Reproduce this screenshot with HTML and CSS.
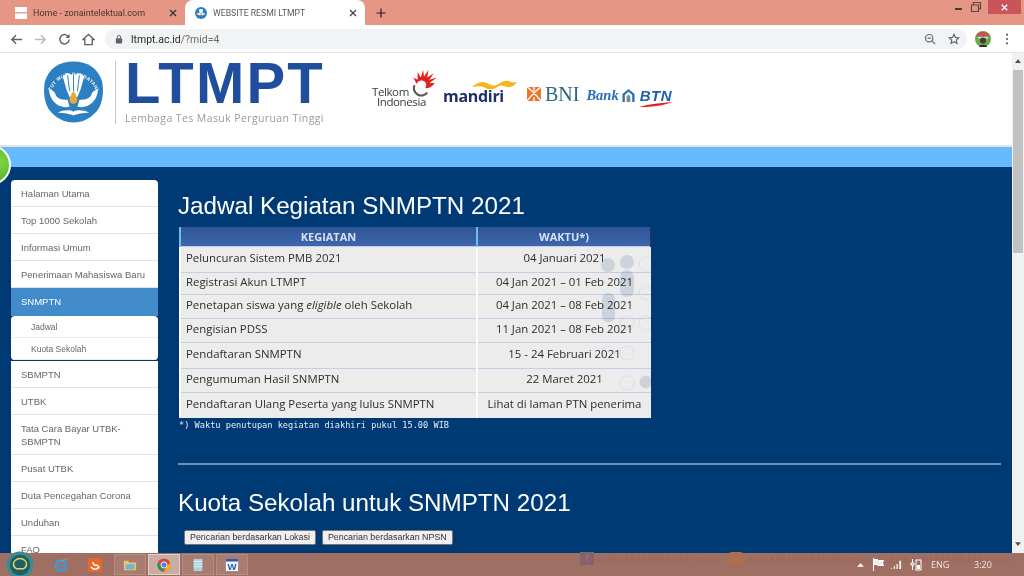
FILE: index.html
```html
<!DOCTYPE html>
<html lang="en">
<head>
    <meta charset="UTF-8">
    <meta name="viewport" content="width=device-width, initial-scale=1.0">
    <title>WEBSITE RESMI LTMPT</title>
    <link rel="stylesheet" href="styles.css">
</head>
<body>
    <div class="tabstrip">
        <div class="tab">
            <svg class="favicon" viewBox="0 0 12 12"><rect width="12" height="12" fill="#fff"/><rect y="5" width="12" height="1.5" fill="#e8a090"/></svg>
            <span class="tab-title">Home - zonaintelektual.com</span>
            <svg class="tab-close" viewBox="0 0 10 10"><path d="M2 2l6 6M8 2l-6 6" stroke="#333" stroke-width="1.3"/></svg>
        </div>
        <div class="tab active">
            <svg class="favicon" viewBox="0 0 12 12"><circle cx="6" cy="6" r="6" fill="#2b7fc3"/><path d="M1.500 6c1 2 3 2.500 4.500 2 1.500.5 3.500 0 4.500-2-1 .5-2.500.5-3 0L8 2.500 6 2 4 2.500 4.500 6c-.5.5-2 .5-3 0z" fill="#fff"/><circle cx="6" cy="7" r="1" fill="#e8a33a"/></svg>
            <span class="tab-title">WEBSITE RESMI LTMPT</span>
            <svg class="tab-close" viewBox="0 0 10 10"><path d="M2 2l6 6M8 2l-6 6" stroke="#444" stroke-width="1.3"/></svg>
        </div>
        <svg class="new-tab" viewBox="0 0 10 10"><path d="M5 .5v9M.5 5h9" stroke="#222" stroke-width="1.200"/></svg>
        <div class="window-controls">
            <svg class="win-btn min" viewBox="0 0 12 12"><rect x="1" y="7" width="7" height="2" fill="#4a3a36"/></svg>
            <svg class="win-btn" viewBox="0 0 12 12"><path d="M1.500 4h7v6.500h-7zM3.500 4V1.500h7V8H8.500" fill="none" stroke="#5a4a46" stroke-width="1.200"/></svg>
            <div class="win-close"><svg viewBox="0 0 10 10"><path d="M2 2l6 6M8 2l-6 6" stroke="#fff" stroke-width="1.500"/></svg></div>
        </div>
    </div>
    <div class="toolbar">
        <svg class="nav-icon" viewBox="0 0 14 14"><path d="M13 7H2M6.500 2.500L2 7l4.500 4.500" fill="none" stroke="#5f6368" stroke-width="1.600"/></svg>
        <svg class="nav-icon" viewBox="0 0 14 14"><path d="M1 7h11M7.500 2.500L12 7l-4.500 4.500" fill="none" stroke="#b9bbbe" stroke-width="1.600"/></svg>
        <svg class="nav-icon" viewBox="0 0 14 14"><path d="M11.500 4.500A5 5 0 1 0 12 7" fill="none" stroke="#5f6368" stroke-width="1.600"/><path d="M12.500 1v4.500H8z" fill="#5f6368"/></svg>
        <svg class="nav-icon" viewBox="0 0 14 14"><path d="M7 1.500L1 7h2v5.500h8V7h2z" fill="none" stroke="#5f6368" stroke-width="1.500"/></svg>
        <div class="omnibox">
            <svg class="lock" viewBox="0 0 10 12"><rect x="1" y="5" width="8" height="6.500" rx="1" fill="#5f6368"/><path d="M3 5V3.500a2 2 0 0 1 4 0V5" fill="none" stroke="#5f6368" stroke-width="1.200"/></svg>
            <span class="url">ltmpt.ac.id<span class="url-path">/?mid=4</span></span>
            <svg class="omni-icon" viewBox="0 0 14 14"><circle cx="6" cy="6" r="4.300" fill="none" stroke="#5f6368" stroke-width="1.300"/><path d="M9.200 9.200L13 13M4 6h4" stroke="#5f6368" stroke-width="1.300"/></svg>
            <svg class="omni-icon star" viewBox="0 0 14 14"><path d="M7 1.500l1.700 3.600 3.800.5-2.800 2.600.7 3.900L7 10.200l-3.400 1.900.7-3.900L1.500 5.600l3.800-.5z" fill="none" stroke="#5f6368" stroke-width="1.300"/></svg>
        </div>
        <svg class="avatar" viewBox="0 0 16 16"><circle cx="8" cy="8" r="8" fill="#6aa84f"/><path d="M1 5a8 8 0 0 1 14 0z" fill="#c9534f"/><path d="M3 6h10v1.500H3z" fill="#ddd"/><circle cx="8" cy="9.500" r="3" fill="#4a3b2f"/><path d="M4 16c0-3 8-3 8 0z" fill="#2f2a26"/></svg>
        <svg class="kebab" viewBox="0 0 4 14"><circle cx="2" cy="2" r="1.300" fill="#5f6368"/><circle cx="2" cy="7" r="1.300" fill="#5f6368"/><circle cx="2" cy="12" r="1.300" fill="#5f6368"/></svg>
    </div>

    <div class="viewport">
        <div class="page">
            <header class="site-header">
                <svg class="seal" viewBox="0 0 62 62">
                    <path d="M31 0C45 0 56 7 60 20 62 30 61 42 55 50 48 58 40 62 31 62 22 62 14 58 7 50 1 42 0 30 2 20 6 7 17 0 31 0z" fill="#2b7fc3"/>
                    <defs><path id="seal-arc" d="M7 34A24.500 24.500 0 0 1 55 34"/></defs>
                    <text class="seal-text"><textPath href="#seal-arc" startOffset="50%" text-anchor="middle">TUT WURI HANDAYANI</textPath></text>
                    <path d="M20 15c3-2 5-3 5-3l6 2 6-2s2 1 5 3l-4 14-3 7h-8l-3-7z" fill="#fff"/>
                    <path d="M25 14l2 16M31 14v16M37 14l-2 16" stroke="#2b7fc3" stroke-width="1"/>
                    <path d="M6 28c4 1 6 3 7 6s5 5 12 5l2 7c-10 2-20-4-21-18zM56 28c-4 1-6 3-7 6s-5 5-12 5l-2 7c10 2 20-4 21-18z" fill="#fff"/>
                    <path d="M31 30c3 4 4 7 4 9a4 4 0 0 1-8 0c0-2 1-5 4-9z" fill="#eba83a"/>
                    <path d="M15 52c6-3 13-3 16-1 3-2 10-2 16 1-6 0-13 1-16 3-3-2-10-3-16-3z" fill="#fff"/>
                </svg>
                <div class="brand">
                    <div class="brand-name">LTMPT</div>
                    <div class="brand-sub">Lembaga Tes Masuk Perguruan Tinggi</div>
                </div>
                <div class="sponsors">
                    <div class="telkom">
                        <svg class="telkom-mark" viewBox="0 0 28 26">
                            <path d="M6 14a7 7 0 0 0 12 7" fill="none" stroke="#5a5a5a" stroke-width="2"/>
                            <path d="M8 13c1-3 4-4 6-3 3 1 4 4 2 7 4 0 7-2 9-5l-5 0 7-5-7 2 4-6-6 4 1-7-4 6-1-6-2 7-3-5 0 7-4-2z" fill="#e0231c"/>
                        </svg>
                        <span class="telkom-text">Telkom<br><span class="telkom-indent">Indonesia</span></span>
                    </div>
                    <div class="mandiri">
                        <svg class="mandiri-wave" viewBox="0 0 46 9"><path d="M0 7C6 2 10 1 15 3s7 4 12 1 7-4 10-3 5 2 9 1c-3 4-6 6-10 5s-6-3-10 0-8 3-12 1-8-2-14-1z" fill="#f6b51e"/></svg>
                        <span class="mandiri-text">mandiri</span>
                    </div>
                    <div class="bni">
                        <svg class="bni-mark" viewBox="0 0 14 14"><rect width="14" height="14" fill="#e9762b"/><path d="M0 0c5 3 9 8 14 14M14 0C9 3 5 8 0 14M7 0v4M7 10v4" fill="none" stroke="#fff" stroke-width="1.300"/></svg>
                        <span class="bni-text">BNI</span>
                    </div>
                    <div class="btn-bank">
                        <span class="bank-text">Bank</span>
                        <svg class="btn-house" viewBox="0 0 14 15"><path d="M7 .5L.5 6v8.500h13V6z" fill="#2a70b8"/><path d="M7 3.500L3 7v7.500h8V7z" fill="#fff"/><path d="M5 14.500V9a2 2 0 0 1 4 0v5.500z" fill="#7c8a96"/></svg>
                        <div class="btn-mark">
                            <span class="btn-text">BTN</span>
                            <svg class="btn-swoosh" viewBox="0 0 34 5"><path d="M0 5C10 2 22 1 34 0c-8 3-20 5-34 5z" fill="#e21f26"/></svg>
                        </div>
                    </div>
                </div>
            </header>
            <div class="blue-bar"></div>
            <div class="green-dot"></div>
            <main class="main">
                <nav class="sidebar">
                    <a class="menu-item first">Halaman Utama</a>
                    <a class="menu-item">Top 1000 Sekolah</a>
                    <a class="menu-item">Informasi Umum</a>
                    <a class="menu-item">Penerimaan Mahasiswa Baru</a>
                    <a class="menu-item current">SNMPTN</a>
                    <div class="submenu">
                        <a class="submenu-item">Jadwal</a>
                        <a class="submenu-item">Kuota Sekolah</a>
                    </div>
                    <a class="menu-item">SBMPTN</a>
                    <a class="menu-item">UTBK</a>
                    <a class="menu-item">Tata Cara Bayar UTBK-SBMPTN</a>
                    <a class="menu-item">Pusat UTBK</a>
                    <a class="menu-item">Duta Pencegahan Corona</a>
                    <a class="menu-item">Unduhan</a>
                    <a class="menu-item">FAQ</a>
                </nav>
                <section class="content">
                    <h2 class="title">Jadwal Kegiatan SNMPTN 2021</h2>
                    <div class="table-wrap">
                        <table class="schedule">
                            <thead>
                                <tr>
                                    <th class="col-a">KEGIATAN</th>
                                    <th class="col-b">WAKTU*)</th>
                                </tr>
                            </thead>
                            <tbody>
                                <tr class="row-l"><td>Peluncuran Sistem PMB 2021</td><td>04 Januari 2021</td></tr>
                                <tr class="row-s"><td>Registrasi Akun LTMPT</td><td>04 Jan 2021 – 01 Feb 2021</td></tr>
                                <tr class="row-m"><td>Penetapan siswa yang <em>eligible</em> oleh Sekolah</td><td>04 Jan 2021 – 08 Feb 2021</td></tr>
                                <tr class="row-m"><td>Pengisian PDSS</td><td>11 Jan 2021 – 08 Feb 2021</td></tr>
                                <tr class="row-l"><td>Pendaftaran SNMPTN</td><td>15 - 24 Februari 2021</td></tr>
                                <tr class="row-m"><td>Pengumuman Hasil SNMPTN</td><td>22 Maret 2021</td></tr>
                                <tr class="row-n"><td>Pendaftaran Ulang Peserta yang lulus SNMPTN</td><td>Lihat di laman PTN penerima</td></tr>
                            </tbody>
                        </table>
                        <svg class="table-mark" viewBox="0 0 52 150">
                            <circle cx="7" cy="17" r="7"/><circle cx="26" cy="14" r="7"/><rect x="19" y="22" width="14" height="27" rx="7"/><rect x="1" y="45" width="13" height="29" rx="6"/><circle cx="45" cy="134" r="6.500"/>
                            <circle class="ring" cx="45" cy="16" r="7"/><circle class="ring" cx="45" cy="45" r="7"/><circle class="ring" cx="26" cy="75" r="7"/><circle class="ring" cx="45" cy="75" r="7"/><circle class="ring" cx="7" cy="105" r="7"/><circle class="ring" cx="26" cy="105" r="7"/><circle class="ring" cx="26" cy="135" r="7"/>
                        </svg>
                    </div>
                    <p class="footnote">*) Waktu penutupan kegiatan diakhiri pukul 15.00 WIB</p>
                    <hr class="divider">
                    <h2 class="title">Kuota Sekolah untuk SNMPTN 2021</h2>
                    <div class="search-buttons">
                        <button class="search-btn">Pencarian berdasarkan Lokasi</button>
                        <button class="search-btn">Pencarian berdasarkan NPSN</button>
                    </div>
                </section>
            </main>
        </div>
        <div class="scrollbar">
            <svg class="scroll-arrow" viewBox="0 0 8 5"><path d="M4 0l4 5H0z" fill="#505050"/></svg>
            <div class="scroll-thumb"></div>
            <svg class="scroll-arrow" viewBox="0 0 8 5"><path d="M0 0h8L4 5z" fill="#505050"/></svg>
        </div>
    </div>

    <footer class="taskbar">
        <svg class="start-orb" viewBox="0 0 30 30">
            <circle cx="15" cy="15" r="14.500" fill="#3f8a8f"/>
            <circle cx="15" cy="15" r="11" fill="#1f5f66"/>
            <path d="M15 8c-4 0-7 3-7 6 0 2 1 4 3 5h8c2-1 3-3 3-5 0-3-3-6-7-6z" fill="none" stroke="#e7d36a" stroke-width="1.500"/>
        </svg>
        <svg class="quick-icon ie" viewBox="0 0 16 16"><circle cx="8" cy="8.500" r="5" fill="none" stroke="#3a9ad9" stroke-width="2.500"/><path d="M3 8.500h10" stroke="#3a9ad9" stroke-width="1.500"/><path d="M1 13c0-4 8-11 14-11-3-1-12 4-14 11z" fill="#e3b341"/></svg>
        <svg class="quick-icon uc" viewBox="0 0 16 16"><rect x="1" y="1" width="14" height="14" rx="3" fill="#e8682a"/><path d="M4 10c2 3 7 3 8-1M6 5c0 3 2 4 5 3" fill="none" stroke="#fff" stroke-width="1.500"/></svg>
        <div class="task-btn"><svg viewBox="0 0 16 14"><path d="M1 2h5l1 2h8v9H1z" fill="#e8c96a"/><rect x="3" y="6" width="10" height="6" fill="#6fb5d8"/></svg></div>
        <div class="task-btn on"><svg viewBox="0 0 16 16"><circle cx="8" cy="8" r="7.500" fill="#db4437"/><path d="M15 5a7.500 7.500 0 0 1-7 10.500L11 10z" fill="#f4b400"/><path d="M1.500 4.500L5 11l3 4.500A7.500 7.500 0 0 1 1.500 4.500z" fill="#0f9d58"/><circle cx="8" cy="8" r="3.500" fill="#4285f4" stroke="#fff"/></svg></div>
        <div class="task-btn"><svg viewBox="0 0 14 16"><rect x="2" y="1" width="10" height="14" fill="#a9d2dc"/><path d="M2 4h10M2 7h10M2 10h10" stroke="#e5f2f5"/></svg></div>
        <div class="task-btn"><svg viewBox="0 0 16 16"><rect x="1" y="1" width="14" height="14" fill="#f2f6fb"/><rect x="1" y="1" width="14" height="3" fill="#2b5aa8"/><text class="word-w" x="8" y="13.500" text-anchor="middle">W</text></svg></div>
        <div class="watermark">
            <span class="wm-item"><span class="wm-fb">f</span>zonaintelektual.com</span>
            <span class="wm-item"><span class="wm-ig"></span>zonaintelektual.com</span>
            <span class="wm-item"><span class="wm-gap"></span>zonaintelektual.com</span>
        </div>
        <div class="tray">
            <svg class="tray-arrow" viewBox="0 0 8 4"><path d="M4 0l4 4H0z" fill="#fff"/></svg>
            <svg class="tray-icon" viewBox="0 0 12 13"><path d="M1.500 0v13M1.500 1.500h4l1 1h5l-1 2.500 1 2.500h-6l-1-1h-3" fill="#eee" stroke="#fff"/></svg>
            <svg class="tray-icon" viewBox="0 0 13 12"><path d="M1 10h1.500v1H1zM4 8h1.500v3H4zM7 5.500h1.500V11H7zM10 2h2v9h-2z" fill="#eee"/></svg>
            <svg class="tray-icon batt" viewBox="0 0 12 13"><rect x="6" y="2" width="5" height="10" fill="none" stroke="#fff"/><rect x="7" y="7" width="3" height="4" fill="#fff"/><path d="M2.500 1v4M1 5h3v2H1zM2.500 7v5" stroke="#fff" fill="none"/></svg>
            <span class="tray-lang">ENG</span>
            <span class="tray-clock">3:20</span>
        </div>
    </footer>
</body>
</html>
```

FILE: styles.css
```css
body {
    margin: 0;
    height: 576px;
    overflow: hidden;
    display: flex;
    flex-direction: column;
    font-family: 'Liberation Sans', Arial, sans-serif;
    background-color: #fff;}
.tabstrip {
    height: 25px;
    flex: none;
    display: flex;
    align-items: flex-start;
    background-color: #e59684;
    border-bottom: 1px solid #fff;}
.tab {
    width: 185px;
    height: 25px;
    box-sizing: border-box;
    padding-left: 15px;
    display: flex;
    align-items: center;
    font-family: Roboto, sans-serif;
    font-size: 9px;
    color: #4a3531;}
.tab.active {
    width: 180px;
    padding-left: 10px;
    font-size: 8.700px;
    background-color: #fff;
    border-radius: 8px 8px 0 0;
    color: #5a5a5a;}
.favicon {
    width: 12px;
    height: 12px;
    margin-right: 6px;}
.tab-title {
    flex: 1;
    white-space: nowrap;}
.tab-close {
    width: 10px;
    height: 10px;
    margin-right: 7px;}
.new-tab {
    width: 10px;
    height: 10px;
    margin: 8px 0 0 11px;}
.window-controls {
    margin-left: auto;
    display: flex;
    align-items: flex-start;
    margin-right: 3px;}
.win-btn {
    width: 12px;
    height: 12px;
    margin: 1px 6px 0 0;}
.win-btn.min {
    margin-right: 4px;}
.win-close {
    width: 33px;
    height: 14px;
    display: flex;
    justify-content: center;
    align-items: center;
    background-color: #c9545a;}
.win-close svg {
    width: 9px;
    height: 9px;}

.toolbar {
    height: 27px;
    flex: none;
    box-sizing: border-box;
    display: flex;
    align-items: center;
    padding-left: 10px;
    background-color: #fff;
    border-bottom: 1px solid #e4e4e4;}
.nav-icon {
    width: 13px;
    height: 13px;
    margin-right: 11px;}
.omnibox {
    width: 862px;
    height: 20px;
    margin-left: -1px;
    box-sizing: border-box;
    padding: 0 7px 0 10px;
    display: flex;
    align-items: center;
    border-radius: 10px;
    background-color: #f1f3f4;}
.lock {
    width: 8px;
    height: 10px;
    margin-right: 8px;}
.url {
    flex: 1;
    font-family: Roboto, sans-serif;
    font-size: 10.5px;
    color: #2a2a2a;}
.url-path {
    color: #6a6a6a;}
.omni-icon {
    width: 12px;
    height: 12px;}
.omni-icon.star {
    margin-left: 12px;}
.avatar {
    width: 16px;
    height: 16px;
    margin-left: 8px;}
.kebab {
    width: 4px;
    height: 12px;
    margin-left: 14px;}

.viewport {
    flex: 1;
    min-height: 0;
    display: flex;}
.page {
    flex: 1;
    min-width: 0;
    position: relative;
    display: flex;
    flex-direction: column;
    overflow: hidden;}
.scrollbar {
    width: 12px;
    flex: none;
    display: flex;
    flex-direction: column;
    align-items: center;
    background-color: #f1f1f1;}
.scroll-arrow {
    width: 6px;
    height: 4px;
    margin: 6px 0 7px;}
.scroll-thumb {
    width: 10px;
    height: 183px;
    margin-bottom: auto;
    background-color: #c1c1c1;}

.site-header {
    height: 94px;
    flex: none;
    box-sizing: border-box;
    display: flex;
    align-items: flex-start;
    padding: 8px 0 0 43px;
    background-color: #fff;
    border-bottom: 2px solid #e4e4e4;}
.seal {
    width: 61px;
    height: 62px;}
.seal-text {
    font-size: 4.800px;
    font-weight: bold;
    letter-spacing: .3px;
    fill: #fff;}
.brand {
    height: 63px;
    margin: 0 0 0 11px;
    padding-left: 9px;
    border-left: 1px solid #c8c8c8;}
.brand-name {
    font-size: 58px;
    line-height: 58px;
    height: 44px;
    margin-top: -7px;
    margin-bottom: 13px;
    font-weight: bold;
    letter-spacing: 2.200px;
    color: #1f4e9c;}
.brand-sub {
    font-family: 'Open Sans', sans-serif;
    font-size: 10.5px;
    letter-spacing: .4px;
    white-space: nowrap;
    color: #9a9a9a;}
.sponsors {
    display: flex;
    align-items: flex-start;
    margin-left: 47px;
    margin-top: 13px;}
.telkom {
    position: relative;
    width: 54px;
    height: 38px;}
.telkom-mark {
    position: absolute;
    left: 36px;
    top: -4px;
    width: 30px;
    height: 28px;}
.telkom-text {
    position: absolute;
    left: 0;
    top: 13px;
    font-family: 'Open Sans', sans-serif;
    font-size: 11.500px;
    line-height: 10px;
    letter-spacing: -.4px;
    color: #3a3a3a;}
.telkom-indent {
    margin-left: 5px;}
.mandiri {
    position: relative;
    width: 75px;
    margin-left: 17px;
    padding-top: 12px;}
.mandiri-wave {
    position: absolute;
    left: 29px;
    top: 6px;
    width: 45px;
    height: 9px;}
.mandiri-text {
    display: block;
    font-family: 'Open Sans', sans-serif;
    font-size: 16px;
    line-height: 20px;
    font-weight: 700;
    letter-spacing: -.3px;
    color: #1f2f6b;}
.bni {
    display: flex;
    align-items: center;
    margin: 12px 0 0 9px;}
.bni-mark {
    width: 14px;
    height: 14px;}
.bni-text {
    margin-left: 4px;
    font-family: 'Liberation Serif', serif;
    font-size: 20px;
    line-height: 16px;
    color: #2d6a80;}
.btn-bank {
    display: flex;
    align-items: center;
    margin: 13px 0 0 7px;}
.bank-text {
    font-family: 'Liberation Serif', serif;
    font-size: 14.500px;
    font-style: italic;
    font-weight: bold;
    color: #2a70b8;}
.btn-house {
    width: 13px;
    height: 15px;
    margin: 0 5px 0 3px;}
.btn-mark {
    position: relative;}
.btn-text {
    display: block;
    font-size: 15px;
    line-height: 15px;
    font-weight: bold;
    font-style: italic;
    letter-spacing: .5px;
    color: #1e60ae;}
.btn-swoosh {
    position: absolute;
    left: -1px;
    top: 14px;
    width: 34px;
    height: 5px;}

.blue-bar {
    height: 20px;
    flex: none;
    background-color: #66bbff;}
.green-dot {
    position: absolute;
    left: -29px;
    top: 92px;
    width: 36px;
    height: 36px;
    border: 2px solid #fff;
    border-radius: 50%;
    background: radial-gradient(circle at 75% 40%, #7fd640, #3c9c1e);}

.main {
    flex: 1;
    min-height: 0;
    display: flex;
    align-items: flex-start;
    box-sizing: border-box;
    padding: 13px 0 0 11px;
    background-color: #003a75;}
.sidebar {
    width: 147px;
    flex: none;
    display: flex;
    flex-direction: column;
    font-size: 9.500px;
    line-height: 13px;
    color: #666;}
.menu-item {
    box-sizing: border-box;
    padding: 7px 10px 6px;
    background-color: #fff;
    border-bottom: 1px solid #e2e2e2;}
.menu-item.first {
    border-radius: 4px 4px 0 0;}
.menu-item.current {
    padding-bottom: 8px;
    border-bottom: 0;
    background-color: #428bca;
    color: #fff;}
.submenu {
    margin-bottom: 1px;
    overflow: hidden;
    border-radius: 4px;
    background-color: #fff;}
.submenu-item {
    display: block;
    height: 22px;
    box-sizing: border-box;
    padding: 6px 20px 0;
    font-size: 8.500px;
    line-height: 11px;
    color: #666;
    border-bottom: 1px solid #ececec;}

.content {
    flex: 1;
    min-width: 0;
    margin: 12px 11px 0 20px;}
.title {
    margin: 0;
    font-size: 24.200px;
    line-height: 27px;
    font-weight: normal;
    color: #fff;}
.table-wrap {
    position: relative;
    width: 473px;
    margin: 8px 0 0 1px;}
.schedule {
    width: 473px;
    table-layout: fixed;
    border-collapse: collapse;
    font-family: 'Open Sans', sans-serif;
    font-size: 11.400px;
    color: #2d2d2d;}
.schedule th {
    height: 19px;
    padding: 0;
    font-size: 11px;
    font-weight: 700;
    color: #d5e1f3;
    background: linear-gradient(#2f5597, #3d66ad);
    border-left: 2px solid #6cbdf0;}
.schedule th.col-b {
    border-right: 2px solid #1c3566;}
.col-a {
    width: 295px;}
.schedule td {
    box-sizing: border-box;
    padding: 0 0 4px 5px;
    background-color: #ececec;
    border-top: 1px solid #c3cfe6;
    border-left: 2px solid #fafafa;}
.schedule td:last-child {
    padding: 0 0 4px;
    text-align: center;}
.row-s td {
    height: 22px;}
.row-m td {
    height: 24px;}
.row-n td {
    height: 25px;}
.row-l td {
    height: 26px;}
.table-mark {
    position: absolute;
    left: 422px;
    top: 21px;
    width: 52px;
    height: 150px;
    fill: #b3c3dc;
    opacity: .45;
    mix-blend-mode: multiply;}
.table-mark .ring {
    fill: none;
    stroke: #d5dbe6;
    stroke-width: 1;}
.footnote {
    margin: 2px 0 0 1px;
    font-family: 'DejaVu Sans Mono', monospace;
    font-size: 8.650px;
    line-height: 11px;
    color: #e6edf6;}
.divider {
    margin: 32px 0 0;
    height: 2px;
    border: 0;
    background-color: #6f93b8;}
.divider + .title {
    margin-top: 24px;}
.search-buttons {
    display: flex;
    gap: 6px;
    margin: 14px 0 0 6px;}
.search-btn {
    height: 15px;
    padding: 0 5px;
    font-family: 'Liberation Sans', Arial, sans-serif;
    font-size: 8.900px;
    line-height: 13px;
    color: #333;
    background-color: #efefef;
    border: 1px solid #767676;
    border-radius: 2px;}

.taskbar {
    height: 23px;
    flex: none;
    position: relative;
    display: flex;
    align-items: center;
    padding-left: 53px;
    background-color: #a06f63;}
.start-orb {
    position: absolute;
    left: 6px;
    top: -2px;
    width: 28px;
    height: 28px;}
.quick-icon {
    width: 16px;
    height: 16px;}
.quick-icon.uc {
    margin: 0 11px 0 18px;}
.task-btn {
    width: 32px;
    height: 21px;
    margin-right: 2px;
    display: flex;
    justify-content: center;
    align-items: center;
    background-color: #a97c71;
    border: 1px solid #b48c82;
    box-sizing: border-box;}
.task-btn.on {
    background-color: #c9aca4;
    border-color: #e0cfca;}
.task-btn svg {
    width: 14px;
    height: 14px;}
.word-w {
    font-size: 11px;
    font-weight: bold;
    fill: #2b5aa8;}
.watermark {
    position: absolute;
    left: 580px;
    top: -1px;
    display: flex;
    gap: 10px;
    font-size: 10.500px;
    font-weight: bold;
    letter-spacing: 1.150px;
    white-space: nowrap;
    color: #966a5e;}
.wm-item {
    display: flex;
    align-items: center;}
.wm-fb {
    width: 14px;
    height: 13px;
    margin-right: 3px;
    text-align: center;
    letter-spacing: 0;
    background-color: #82626f;
    color: #a06f63;}
.wm-ig {
    width: 14px;
    height: 13px;
    margin-right: 4px;
    border-radius: 3px;
    background-color: #ad7048;}
.wm-gap {
    width: 10px;}
.tray {
    position: relative;
    margin-left: auto;
    margin-right: 12px;
    display: flex;
    align-items: center;
    color: #f1e6e2;
    font-family: 'Open Sans', sans-serif;
    font-size: 9px;}
.tray-arrow {
    width: 7px;
    height: 4px;
    margin-right: 8px;}
.tray-icon {
    width: 12px;
    height: 13px;
    margin-right: 6px;}
.tray-icon.batt {
    margin-left: 2px;}
.tray-lang {
    margin-left: 3px;
    width: 31px;}
.tray-clock {
    width: 42px;
    text-align: center;
    padding-right: 8px;}
```
